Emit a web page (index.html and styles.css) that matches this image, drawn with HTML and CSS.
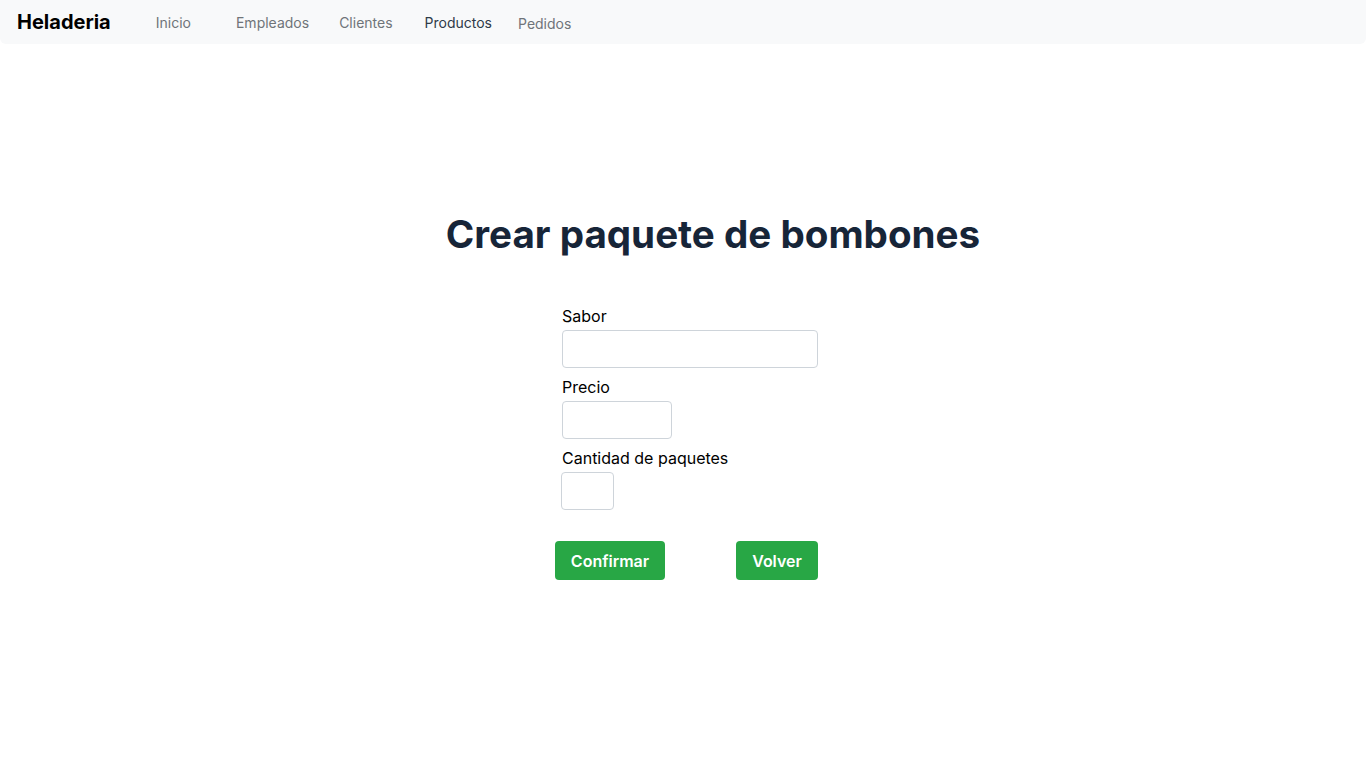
FILE: index.html
```html
<!DOCTYPE html>
<html lang="es">
<head>
<meta charset="utf-8">
<title>Heladeria</title>
<link rel="stylesheet" href="styles.css">
</head>
<body>
<nav class="navbar">
  <a class="brand" href="#">Heladeria</a>
  <ul class="nav">
    <li class="nav-item i1"><a href="#">Inicio</a></li>
    <li class="nav-item i2"><a href="#">Empleados</a></li>
    <li class="nav-item i3"><a href="#">Clientes</a></li>
    <li class="nav-item i4 active"><a href="#">Productos</a></li>
    <li class="nav-item i5 low"><a href="#">Pedidos</a></li>
  </ul>
</nav>
<main class="main">
  <h1 class="title">Crear paquete de bombones</h1>
  <form class="form">
    <div class="field">
      <label for="sabor">Sabor</label>
      <input id="sabor" class="input w-lg" type="text">
    </div>
    <div class="field">
      <label for="precio">Precio</label>
      <input id="precio" class="input w-md" type="text">
    </div>
    <div class="field">
      <label for="cant">Cantidad de paquetes</label>
      <input id="cant" class="input w-sm" type="text">
    </div>
    <div class="actions">
      <button type="button" class="btn btn-confirm">Confirmar</button>
      <button type="button" class="btn btn-back">Volver</button>
    </div>
  </form>
</main>
</body>
</html>
```
FILE: styles.css
```css
* { box-sizing: border-box; }
body {
  margin: 0;
  font-family: Inter, "Noto Sans", sans-serif;
  color: #000;
  background: #fff;
}
.navbar {
  display: flex;
  align-items: center;
  height: 44px;
  background: #f8f9fa;
  border-radius: 0 0 6px 6px;
  padding: 0 17px;
}
.brand {
  font-size: 20px;
  font-weight: 700;
  color: #000;
  text-decoration: none;
  margin-right: 45px;
}
.nav {
  display: flex;
  list-style: none;
  margin: 0;
  padding: 0;
}
.nav-item a {
  font-size: 14px;
  color: #6f7479;
  text-decoration: none;
}
.nav-item.i2 { margin-left: 45px; }
.nav-item.i3 { margin-left: 30px; }
.nav-item.i4 { margin-left: 32px; }
.nav-item.i5 { margin-left: 26px; }
.nav-item.active a { color: #2f3a48; }
.nav-item.low { position: relative; top: 1px; }
.main {
  display: flex;
  flex-direction: column;
  align-items: center;
  padding-top: 166px;
}
.title {
  margin: 0 0 46px 60px;
  font-size: 38.6px;
  font-weight: 700;
  color: #172538;
  line-height: 48px;
}
.form {
  display: flex;
  flex-direction: column;
  width: 263px;
  margin-left: 7px;
}
.field {
  display: flex;
  flex-direction: column;
  align-items: flex-start;
  padding-left: 7px;
  margin-bottom: 7px;
}
.field label {
  font-size: 16px;
  line-height: 24px;
  margin-bottom: 2px;
}
.input {
  height: 38px;
  border: 1px solid #ced4da;
  border-radius: 4px;
  background: #fff;
  font: inherit;
}
.w-lg { width: 256px; }
.w-md { width: 110px; }
.w-sm { width: 53px; margin-left: -1px; }
.actions {
  display: flex;
  justify-content: space-between;
  margin-top: 24px;
}
.btn {
  height: 39px;
  border: none;
  border-radius: 4px;
  background: #28a745;
  color: #fff;
  font-family: inherit;
  font-size: 16px;
  font-weight: 600;
  cursor: pointer;
}
.btn-confirm { width: 110px; }
.btn-back { width: 82px; }
```
